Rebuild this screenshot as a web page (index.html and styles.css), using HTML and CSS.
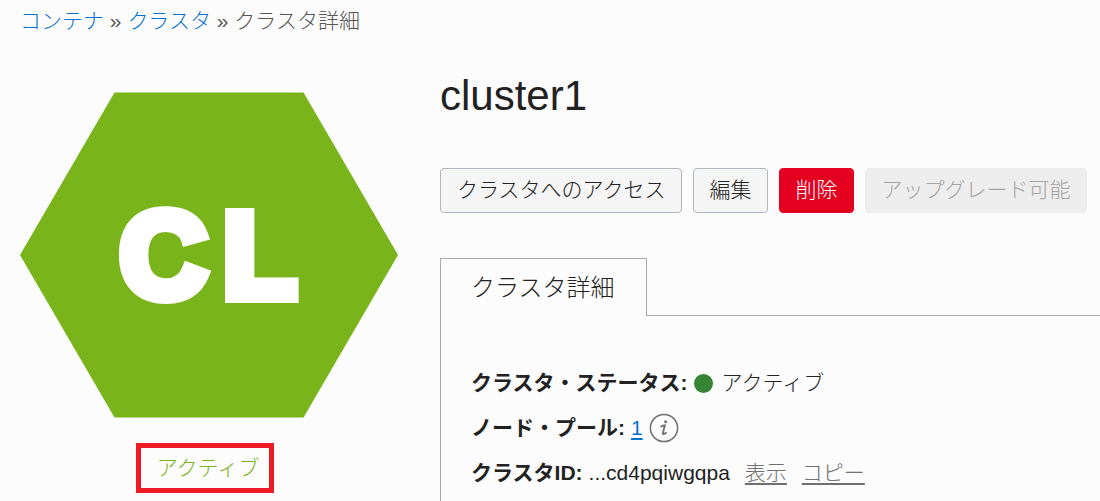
FILE: index.html
```html
<!DOCTYPE html>
<html lang="ja">
<head>
<meta charset="utf-8">
<meta name="viewport" content="width=device-width, initial-scale=1">
<title>クラスタ詳細</title>
<link rel="stylesheet" href="styles.css">
</head>
<body>
<nav class="breadcrumb" aria-label="breadcrumb">
  <a href="#">コンテナ</a> <span>»</span> <a href="#">クラスタ</a> <span>»</span> <span>クラスタ詳細</span>
</nav>
<main class="page">
  <aside class="summary">
    <svg class="hexagon" viewBox="0 0 378 326" role="img" aria-label="CL">
      <polygon points="94.5,0.5 283.5,0.5 378,163 283.5,325.5 94.5,325.5 0,163" fill="#78b41a"/>
      <text class="hexagon-text" x="100 203" y="205">CL</text>
    </svg>
    <div class="state">アクティブ</div>
  </aside>
  <section class="content">
    <h1 class="title">cluster1</h1>
    <div class="actions">
      <button class="button" type="button">クラスタへのアクセス</button>
      <button class="button" type="button">編集</button>
      <button class="button danger" type="button">削除</button>
      <button class="button" type="button" disabled>アップグレード可能</button>
    </div>
    <div class="tabs" role="tablist">
      <button class="tab" type="button" role="tab" aria-selected="true">クラスタ詳細</button>
    </div>
    <div class="panel" role="tabpanel">
      <div class="row"><strong>クラスタ・ステータス:</strong><span class="dot"></span><span>アクティブ</span></div>
      <div class="row"><strong>ノード・プール:</strong><a class="count" href="#">1</a>
        <svg class="info" viewBox="0 0 30 30" aria-hidden="true">
          <circle cx="15" cy="15" r="13.6" fill="none" stroke="#707070" stroke-width="1.5"/>
          <circle cx="16.6" cy="8.8" r="1.5" fill="#707070"/>
          <path d="M12.2 13.6c1.3-.9 2.7-1.4 3.8-1.5l-2.1 7.6c-.3 1.3.3 1.7 1.2 1.3l1.9-1.1" fill="none" stroke="#707070" stroke-width="1.8" stroke-linecap="round" stroke-linejoin="round"/>
        </svg>
      </div>
      <div class="row"><strong>クラスタID:</strong><span>...cd4pqiwgqpa</span><span class="links"><a href="#">表示</a><a href="#">コピー</a></span></div>
    </div>
  </section>
</main>
</body>
</html>
```
FILE: styles.css
```css
* {
  box-sizing: border-box;
}

body {
  margin: 0;
  background: #fcfcfc;
  color: #222;
  font-family: "Liberation Sans", "Noto Sans CJK JP", sans-serif;
  font-size: 21px;
  font-weight: 300;
  line-height: 32px;
}

button {
  font: inherit;
  color: inherit;
}

.breadcrumb {
  padding: 5px 20px;
  color: #555;
}

.breadcrumb a {
  color: #0572ce;
  text-decoration: none;
}

.page {
  display: grid;
  grid-template-columns: 378px minmax(0, 1fr);
  gap: 42px;
  padding: 30px 0 0 20px;
}

.summary {
  display: flex;
  flex-direction: column;
  align-items: center;
  padding-top: 20px;
}

.hexagon {
  display: block;
  width: 100%;
}

.hexagon-text {
  fill: #fff;
  stroke: #fff;
  stroke-width: 12px;
  stroke-linejoin: miter;
  font-family: "Liberation Sans", sans-serif;
  font-size: 120px;
  font-weight: 700;
}

.state {
  margin: 25px 8px 0 0;
  padding: 4px 10px 4px 16px;
  border: 5px solid #ed1c24;
  color: #78b41a;
}

.title {
  margin: 0;
  font-size: 42px;
  font-weight: 400;
  line-height: 48px;
}

.actions {
  display: flex;
  gap: 11px;
  margin-top: 48px;
}

.button {
  height: 45px;
  padding: 0 15px 2px 16px;
  border: 1px solid #b0b6be;
  border-radius: 4px;
  background: #f5f5f5;
  white-space: nowrap;
}

.button.danger {
  border-color: #e5001f;
  background: #e5001f;
  color: #fff;
}

.button:disabled {
  border-color: #ededed;
  background: #ededed;
  color: #a4a4a4;
}

.tabs {
  display: flex;
  margin-top: 45px;
}

.tabs::after {
  flex: 1;
  border-bottom: 1px solid #aaa;
  content: "";
}

.tab {
  height: 58px;
  padding: 0 31px 0 30px;
  border: 1px solid #aaa;
  border-bottom: 0;
  background: #fcfcfc;
  font-size: 24px;
}

.panel {
  display: flex;
  flex-direction: column;
  gap: 13px;
  padding: 51px 30px 12px;
  border-left: 1px solid #aaa;
}

.row {
  display: flex;
  align-items: center;
  gap: 6px;
}

.row strong {
  font-weight: 700;
}

.dot {
  width: 19px;
  height: 19px;
  margin-right: 3px;
  border-radius: 50%;
  background: #358535;
}

.count {
  color: #0572ce;
  text-underline-offset: 3px;
}

.info {
  width: 30px;
  height: 30px;
}

.links {
  display: flex;
  gap: 15px;
  padding-left: 9px;
}

.links a {
  color: #707070;
  text-underline-offset: 3px;
}
```
